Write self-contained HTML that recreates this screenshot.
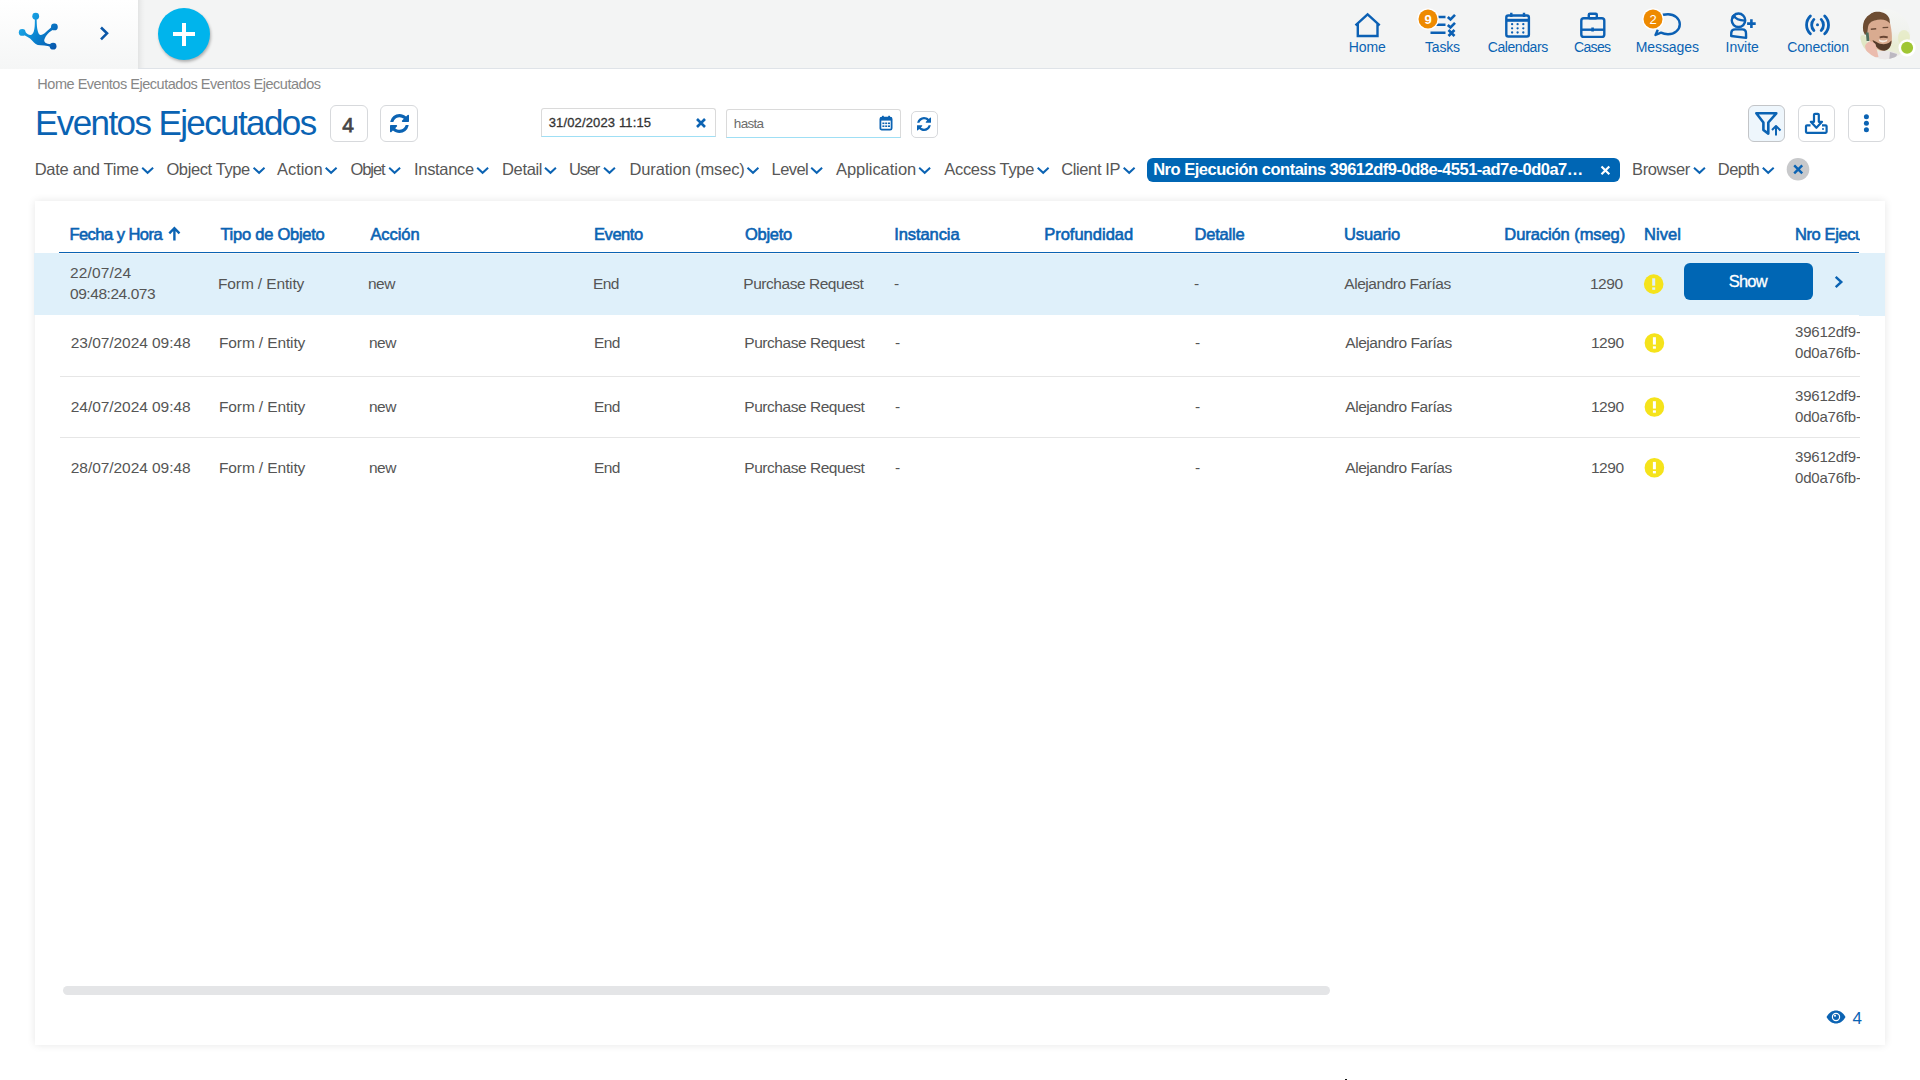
<!DOCTYPE html>
<html><head><meta charset="utf-8">
<style>
html,body{margin:0;padding:0;width:1920px;height:1080px;overflow:hidden;background:#fff;font-family:"Liberation Sans",sans-serif;}
.t{position:absolute;white-space:nowrap;line-height:1;}
.a{position:absolute;}
#hdr{position:absolute;left:0;top:0;width:1920px;height:68px;background:#f3f4f4;border-bottom:1px solid #dfe3e8;}
#lp{position:absolute;left:0;top:0;width:138px;height:69px;background:linear-gradient(180deg,#ffffff 0%,#f5f6f6 100%);}
#lpshadow{position:absolute;left:138px;top:0;width:7px;height:68px;background:linear-gradient(90deg,rgba(0,0,0,0.065),rgba(0,0,0,0.02) 60%,rgba(0,0,0,0));}
.btn{position:absolute;box-sizing:border-box;border:1px solid #d7d9dc;border-radius:6px;background:#fff;}
.inp{position:absolute;box-sizing:border-box;border:1px solid #dadada;border-bottom:1px solid #9fdff5;border-radius:3px 3px 0 0;background:#fff;}
#card{position:absolute;left:35px;top:201px;width:1850px;height:844px;background:#fff;box-shadow:0 0 8px rgba(0,0,0,0.10);}
.hl{position:absolute;background:#dff0fa;}
.rb{position:absolute;height:1px;background:#e6e6e6;}
.clip{position:absolute;overflow:hidden;white-space:nowrap;}
</style></head><body>
<div id="hdr"></div>
<div id="lpshadow"></div>
<div id="lp"></div>

<!-- logo -->
<svg class="a" style="left:0;top:0" width="138" height="68" viewBox="0 0 138 68">
  <defs>
    <linearGradient id="lg" x1="15" y1="20" x2="58" y2="50" gradientUnits="userSpaceOnUse">
      <stop offset="0" stop-color="#22b4f0"/>
      <stop offset="0.5" stop-color="#0a84d0"/>
      <stop offset="1" stop-color="#0850a6"/>
    </linearGradient>
  </defs>
  <g fill="url(#lg)">
    <circle cx="35.7" cy="16.2" r="3.4"/>
    <circle cx="22.2" cy="32.4" r="3.4"/>
    <circle cx="54.4" cy="26.9" r="3.4"/>
    <circle cx="53.1" cy="46.2" r="3.4"/>
    <path d="M22.2,30.5 C25.5,31 26.5,34.8 30.4,34.9 C33.5,35 34.6,30 34.8,24 L34.9,18 L36.6,18 L36.8,24 C37,30 38.5,35 40.7,35.1 C43.5,35.2 47,31 53.3,25.6 L55.2,28.4 C49,31.5 45.5,35.5 44.2,40 C44,43 47.5,44.2 52.6,44.2 L53.4,48.2 C49.5,46 46,45.3 40.5,45.3 C36.5,45.3 34.5,43.5 32.3,40.8 C29.5,37.5 26,35.8 22,34.5 Z"/>
  </g>
  <path d="M101,27.5 L107,33.3 L101,39.3" stroke="#0b57a8" stroke-width="2.6" fill="none"/>
</svg>

<!-- plus button -->
<div class="a" style="left:158px;top:8px;width:52px;height:52px;border-radius:50%;background:#00b4ec;box-shadow:1px 2px 3px rgba(0,0,0,0.28);"></div>
<div class="a" style="left:173px;top:32px;width:22px;height:4px;background:#fff;"></div>
<div class="a" style="left:182px;top:23px;width:4px;height:23px;background:#fff;"></div>

<!-- nav icons -->
<svg class="a" style="left:1330px;top:0" width="520" height="68" viewBox="1330 0 520 68">
  <g stroke="#0b60b4" stroke-width="2.4" fill="none">
    <!-- home -->
    <path d="M1355.5,25.3 L1367.6,14.4 L1379.7,25.3 M1357.8,23.3 L1357.8,36 L1377.5,36 L1377.5,23.3"/>
    <!-- tasks -->
    <path d="M1437,17 L1445.5,17 M1436,24.8 L1445.5,24.8 M1430.5,32.8 L1445.5,32.8"/>
    <path d="M1447.8,17 L1450.5,19.5 L1455,14.8 M1447.8,25 L1450.5,27.5 L1455,22.8" stroke-width="2.6"/>
    <path d="M1448.5,30 L1454.5,36 M1454.5,30 L1448.5,36" stroke-width="2.6"/>
    <!-- calendar -->
    <rect x="1506.3" y="15.5" width="22.6" height="21" rx="2"/>
    <path d="M1506.3,20.3 L1528.9,20.3" stroke-width="3"/>
    <path d="M1511.3,12.8 L1511.3,17 M1524,12.8 L1524,17"/>
    <!-- cases -->
    <rect x="1581.3" y="18.3" width="23" height="18.6" rx="2.5"/>
    <rect x="1588.8" y="13.8" width="8" height="4.5" rx="1"/>
    <path d="M1581.3,29.7 L1604.3,29.7"/>
    <path d="M1592.6,27.5 L1592.6,31.5" stroke-width="2.6"/>
    <!-- messages -->
    <path d="M1659,16.5 C1662,14.8 1665,14.2 1668,14.2 C1674.5,14.2 1679.8,18.6 1679.8,24.2 C1679.8,29.8 1674.5,34.2 1668,34.2 C1665.5,34.2 1663,33.6 1661,32.6 L1655.5,35 L1657.8,29.8" stroke-linejoin="round"/>
    <!-- invite -->
    <circle cx="1738.5" cy="20.3" r="6.75"/>
    <path d="M1733.2,15.2 C1735.5,19 1739.5,20.8 1745.6,20.6"/>
    <path d="M1731.2,36 L1731.3,32.5 C1731.6,30.3 1733,29.4 1735,29.4 L1742.3,29.4 C1744.8,29.4 1746,31 1746,33.2 L1746.1,37.9 Z" stroke-linejoin="round"/>
    <path d="M1751.4,19.3 L1751.4,27.9 M1747.1,23.6 L1755.7,23.6" stroke-width="2.6"/>
    <!-- conection -->
    <path d="M1810.4,16 C1805.3,21 1805.3,29 1810.4,33.8 M1824.7,16 C1829.8,21 1829.8,29 1824.7,33.8" stroke-width="2.8" stroke-linecap="round"/>
    <path d="M1813.9,19.4 C1810.9,22.5 1810.9,27.5 1813.9,30.5 M1821.2,19.4 C1824.2,22.5 1824.2,27.5 1821.2,30.5" stroke-width="2.8" stroke-linecap="round"/>
  </g>
  <g fill="#0b60b4">
    <circle cx="1817.5" cy="24.7" r="1.5"/>
    <path d="M1731.5,16 L1734.5,13.8 L1735.5,17.5 L1732,19.5 Z"/>
    <circle cx="1512.1" cy="24.2" r="1.15"/><circle cx="1517.6" cy="24.2" r="1.15"/><circle cx="1523.3" cy="24.2" r="1.15"/>
    <circle cx="1512.1" cy="28.3" r="1.15"/><circle cx="1517.6" cy="28.3" r="1.15"/><circle cx="1523.3" cy="28.3" r="1.15"/>
    <circle cx="1512.1" cy="32.5" r="1.15"/><circle cx="1517.6" cy="32.5" r="1.15"/><circle cx="1523.3" cy="32.5" r="1.15"/>
  </g>
  <!-- badges -->
  <circle cx="1428" cy="19" r="10.8" fill="#fff"/>
  <circle cx="1428" cy="19" r="9.5" fill="#ee8a00"/>
  <text x="1428" y="23.5" font-family="Liberation Sans" font-weight="700" font-size="13" fill="#fff" text-anchor="middle">9</text>
  <circle cx="1653" cy="19" r="10.8" fill="#fff"/>
  <circle cx="1653" cy="19" r="9.5" fill="#ee8a00"/>
  <text x="1653" y="23.5" font-family="Liberation Sans" font-weight="400" font-size="13" fill="#fff" text-anchor="middle">2</text>
</svg>

<!-- avatar -->
<svg class="a" style="left:1855px;top:4px" width="65" height="60" viewBox="1855 4 65 60">
  <defs>
    <clipPath id="av"><circle cx="1885.1" cy="34.1" r="25.1"/></clipPath>
    <linearGradient id="bgav" x1="0" y1="0" x2="0" y2="1">
      <stop offset="0" stop-color="#f6f7f6"/><stop offset="0.45" stop-color="#f0f2ee"/><stop offset="0.7" stop-color="#e8ecd2"/><stop offset="1" stop-color="#eef0e6"/>
    </linearGradient>
  </defs>
  <g clip-path="url(#av)">
    <rect x="1855" y="4" width="65" height="60" fill="url(#bgav)"/>
    <ellipse cx="1904" cy="38" rx="6" ry="8" fill="#e4e9bd" opacity="0.7"/>
    <ellipse cx="1863" cy="42" rx="4" ry="7" fill="#dde5bf" opacity="0.8"/>
    <path d="M1874,53 C1881,49.5 1892,50 1900,55 L1900,62 L1872,62 Z" fill="#ebe7e8"/>
    <path d="M1890,52 L1897,54 L1895,62 L1889,62 Z" fill="#9c9aa6" opacity="0.6"/>
    <path d="M1867.5,24 C1874,19 1883,17 1889.5,21 C1891.5,28 1892.5,37 1891.5,43.5 C1889.5,49.5 1884,51.5 1880,50.5 C1874,48.5 1869.5,42 1868,36 Z" fill="#d9ab90"/>
    <path d="M1863.2,31 C1861.8,21 1866.5,13.5 1874.5,12 C1881.5,11 1887.5,13.5 1889.5,19 L1889.8,23.5 C1887,19.5 1881,18.5 1874.5,20.5 C1870.5,21.8 1868.5,23.5 1868,27 L1867.5,33 L1865,35 Z" fill="#6d4c32"/>
    <path d="M1870.8,29.3 L1876.2,28.8 M1882.6,27.6 L1888.2,27.4" stroke="#6a4a36" stroke-width="1.4"/>
    <path d="M1879.5,36.5 C1882,35.5 1885.5,35.5 1888,36.5 L1887.5,38.2 C1885,37.5 1882,37.5 1879.8,38.2 Z" fill="#6a4634"/>
    <path d="M1872.5,40 C1875,47 1879.5,50.8 1884.5,50.8 C1889.5,50 1891.5,45.5 1891.5,40.5 L1889,42.8 C1886,44.8 1880.5,44.8 1876.5,42 Z" fill="#553b2b"/>
    <path d="M1878.8,39.2 C1881.5,41 1885,41 1887.5,39.2 L1887,41.3 C1884,42.8 1881,42.8 1879.2,41.3 Z" fill="#f4e8e0"/>
    <path d="M1865,46 C1866.8,40.5 1872,40 1875.5,44 L1878.5,57 L1867,58 Z" fill="#ebbcae"/>
    <path d="M1865.8,32.5 L1868.6,32.5 L1869.4,41 L1866.6,41 Z" fill="#4e6e5c"/>
  </g>
  <circle cx="1907.1" cy="47.8" r="8.6" fill="#fff"/>
  <circle cx="1907.1" cy="47.8" r="6" fill="#a0c634"/>
</svg>

<!-- title row buttons -->
<div class="btn" style="left:330px;top:105px;width:38px;height:37px;"></div>
<div class="btn" style="left:380px;top:105px;width:38px;height:37px;"></div>
<svg class="a" style="left:390px;top:114px" width="19" height="19" viewBox="0 0 1536 1536"><path fill="#0b63b3" d="M1511 928q0 5-1 7-64 268-268 434.5T764 1536q-146 0-282.5-55T238 1324l-129 129q-19 19-45 19t-45-19-19-45V960q0-26 19-45t45-19h448q26 0 45 19t19 45-19 45l-137 137q71 66 161 102t187 36q134 0 250-65t186-179q11-17 53-117 8-23 30-23h192q13 0 22.5 9.5t9.5 22.5zm25-800v448q0 26-19 45t-45 19h-448q-26 0-45-19t-19-45 19-45l138-138Q969 256 768 256q-134 0-250 65T332 500q-11 17-53 117-8 23-30 23H50q-13 0-22.5-9.5T18 608v-7q65-268 270-434.5T768 0q146 0 284 55.5T1297 212l130-129q19-19 45-19t45 19 19 45z"/></svg>

<!-- inputs -->
<div class="inp" style="left:541px;top:108px;width:175px;height:29px;"></div>
<svg class="a" style="left:695px;top:117px" width="12" height="12" viewBox="0 0 12 12"><path d="M2,2 L10,10 M10,2 L2,10" stroke="#0b63b3" stroke-width="2.6"/></svg>
<div class="inp" style="left:726px;top:109px;width:175px;height:29px;"></div>
<svg class="a" style="left:879px;top:115px" width="14" height="16" viewBox="0 0 14 16">
  <g fill="#0b63b3"><rect x="3" y="0.8" width="1.8" height="3"/><rect x="9.2" y="0.8" width="1.8" height="3"/></g>
  <rect x="1.4" y="2.6" width="11.2" height="12" rx="1.4" fill="none" stroke="#0b63b3" stroke-width="1.8"/>
  <rect x="1.4" y="2.6" width="11.2" height="3" fill="#0b63b3"/>
  <g fill="#0b63b3"><rect x="3.4" y="7.5" width="2" height="1.6"/><rect x="6.2" y="7.5" width="2" height="1.6"/><rect x="9" y="7.5" width="2" height="1.6"/><rect x="3.4" y="10.4" width="2" height="1.6"/><rect x="6.2" y="10.4" width="2" height="1.6"/><rect x="9" y="10.4" width="2" height="1.6"/></g>
</svg>
<div class="btn" style="left:911px;top:111px;width:27px;height:27px;border-radius:5px;"></div>
<svg class="a" style="left:917px;top:117px" width="14" height="14" viewBox="0 0 1536 1536"><path fill="#0b63b3" d="M1511 928q0 5-1 7-64 268-268 434.5T764 1536q-146 0-282.5-55T238 1324l-129 129q-19 19-45 19t-45-19-19-45V960q0-26 19-45t45-19h448q26 0 45 19t19 45-19 45l-137 137q71 66 161 102t187 36q134 0 250-65t186-179q11-17 53-117 8-23 30-23h192q13 0 22.5 9.5t9.5 22.5zm25-800v448q0 26-19 45t-45 19h-448q-26 0-45-19t-19-45 19-45l138-138Q969 256 768 256q-134 0-250 65T332 500q-11 17-53 117-8 23-30 23H50q-13 0-22.5-9.5T18 608v-7q65-268 270-434.5T768 0q146 0 284 55.5T1297 212l130-129q19-19 45-19t45 19 19 45z"/></svg>

<!-- right buttons -->
<div class="btn" style="left:1748px;top:105px;width:37px;height:37px;background:#eef6fc;border-color:#c3c5c8;"></div>
<div class="btn" style="left:1798px;top:105px;width:37px;height:37px;"></div>
<div class="btn" style="left:1848px;top:105px;width:37px;height:37px;"></div>
<svg class="a" style="left:1748px;top:105px" width="140" height="37" viewBox="1748 105 140 37">
  <g stroke="#0b63b3" stroke-width="2.6" fill="none" stroke-linejoin="round">
    <path d="M1756.3,113.3 L1776.3,113.3 L1768.3,122.5 L1768.3,133.6 L1763.4,130 L1763.4,122.5 Z"/>
    <path d="M1776,135.5 L1776,126 M1772,130 L1776,126 L1780.5,130.5" stroke-width="2"/>
    <path d="M1810.5,125.3 L1807,125.3 Q1806,125.3 1806,126.3 L1806,131.8 Q1806,132.8 1807,132.8 L1825.6,132.8 Q1826.6,132.8 1826.6,131.8 L1826.6,126.3 Q1826.6,125.3 1825.6,125.3 L1822,125.3" stroke-width="2.2"/>
    <path d="M1814,121.8 L1814,114.8 Q1814,113.8 1815,113.8 L1817.8,113.8 Q1818.8,113.8 1818.8,114.8 L1818.8,121.8 L1822,121.8 L1816.4,127.8 L1810.8,121.8 Z" stroke-width="2.2"/>
  </g>
  <circle cx="1823" cy="129" r="1" fill="#0b63b3"/>
  <g fill="#0b63b3"><circle cx="1866.4" cy="116.8" r="2.5"/><circle cx="1866.4" cy="123.3" r="2.5"/><circle cx="1866.4" cy="129.8" r="2.5"/></g>
</svg>

<!-- filter chevrons -->
<svg class="a" style="left:0;top:150px" width="1920" height="40" viewBox="0 150 1920 40">
  <g stroke="#0b63b3" stroke-width="2" fill="none">
    <path d="M142.2,167.8 L147.6,172.8 L153.1,167.8"/>
<path d="M253.6,167.8 L259.1,172.8 L264.5,167.8"/>
<path d="M325.7,167.8 L331.1,172.8 L336.6,167.8"/>
<path d="M389.2,167.8 L394.6,172.8 L400.1,167.8"/>
<path d="M477.2,167.8 L482.6,172.8 L488.1,167.8"/>
<path d="M545.0,167.8 L550.5,172.8 L555.9,167.8"/>
<path d="M604.0,167.8 L609.5,172.8 L614.9,167.8"/>
<path d="M747.5,167.8 L753.0,172.8 L758.4,167.8"/>
<path d="M811.2,167.8 L816.7,172.8 L822.1,167.8"/>
<path d="M919.2,167.8 L924.7,172.8 L930.1,167.8"/>
<path d="M1037.7,167.8 L1043.2,172.8 L1048.6,167.8"/>
<path d="M1123.7,167.8 L1129.2,172.8 L1134.6,167.8"/>
<path d="M1694.0,167.8 L1699.5,172.8 L1704.9,167.8"/>
<path d="M1762.8,167.8 L1768.2,172.8 L1773.7,167.8"/>
  </g>
  <rect x="1147" y="158" width="473" height="24" rx="6" fill="#0066b4"/>
  <path d="M1601.5,166.5 L1609.3,174.3 M1609.3,166.5 L1601.5,174.3" stroke="#fff" stroke-width="2.2"/>
  <circle cx="1798" cy="169.3" r="11.3" fill="#c8c9cb"/>
  <path d="M1794.2,165.3 L1802.2,173.3 M1802.2,165.3 L1794.2,173.3" stroke="#0b63b3" stroke-width="2.4"/>
</svg>

<!-- card -->
<div id="card"></div>
<div class="hl" style="left:34px;top:253px;width:1851px;height:62px;"></div>
<div class="a" style="left:59px;top:253px;width:1800px;height:1px;background:#f4f6f7;"></div>
<div class="hl" style="left:1859px;top:315px;width:26px;height:1px;"></div>
<div class="a" style="left:59px;top:252px;width:1800px;height:1px;background:#0a63b3;"></div>
<div class="rb" style="left:60px;top:376px;width:1800px;"></div>
<div class="rb" style="left:60px;top:437px;width:1800px;"></div>

<!-- table header arrow -->
<svg class="a" style="left:166px;top:224px" width="18" height="18" viewBox="166 224 18 18">
  <path d="M174.4,240.5 L174.4,228.5 M169.3,233.3 L174.4,228.2 L179.5,233.3" stroke="#0b63b3" stroke-width="2.4" fill="none"/>
</svg>

<!-- warning icons -->
<svg class="a" style="left:1640px;top:270px" width="30" height="210" viewBox="1640 270 30 210">
  <circle cx="1653.7" cy="284.1" r="9.8" fill="#f5e31b"/><rect x="1652.2" y="278.3" width="3" height="7.4" fill="#dff0fa"/><rect x="1652.2" y="287.4" width="3" height="2.4" fill="#dff0fa"/>
<circle cx="1654.4" cy="343" r="9.8" fill="#f5e31b"/><rect x="1652.9" y="337.2" width="3" height="7.4" fill="#fff"/><rect x="1652.9" y="346.3" width="3" height="2.4" fill="#fff"/>
<circle cx="1654.4" cy="407" r="9.8" fill="#f5e31b"/><rect x="1652.9" y="401.2" width="3" height="7.4" fill="#fff"/><rect x="1652.9" y="410.3" width="3" height="2.4" fill="#fff"/>
<circle cx="1654.4" cy="467.7" r="9.8" fill="#f5e31b"/><rect x="1652.9" y="461.9" width="3" height="7.4" fill="#fff"/><rect x="1652.9" y="471.0" width="3" height="2.4" fill="#fff"/>
</svg>

<!-- show button -->
<div class="a" style="left:1684px;top:263px;width:129px;height:37px;border-radius:6px;background:#0066b4;"></div>
<svg class="a" style="left:1830px;top:272px" width="16" height="20" viewBox="1830 272 16 20">
  <path d="M1835.7,276.8 L1841.3,282 L1835.7,287.2" stroke="#0b63b3" stroke-width="2.4" fill="none"/>
</svg>

<!-- nro ejecucion clipped -->
<div class="clip" style="left:1790px;top:220px;width:70px;height:30px;"><div class="t" style="left:5px;top:6px;font-size:16.5px;color:#0a63b3;-webkit-text-stroke:0.6px #0a63b3;letter-spacing:-0.4px">Nro Ejecución</div></div>
<div class="clip" style="left:1795px;top:320.40px;width:65px;height:40px;"><div class="t" style="left:0;top:4px;font-size:15px;color:#555;line-height:21.1px;top:0.95px;letter-spacing:-0.2px">39612df9-0d8e-4551-<br>0d0a76fb-1234</div></div>
<div class="clip" style="left:1795px;top:384.10px;width:65px;height:40px;"><div class="t" style="left:0;top:4px;font-size:15px;color:#555;line-height:21.1px;top:0.95px;letter-spacing:-0.2px">39612df9-0d8e-4551-<br>0d0a76fb-1234</div></div>
<div class="clip" style="left:1795px;top:444.90px;width:65px;height:40px;"><div class="t" style="left:0;top:4px;font-size:15px;color:#555;line-height:21.1px;top:0.95px;letter-spacing:-0.2px">39612df9-0d8e-4551-<br>0d0a76fb-1234</div></div>

<!-- scrollbar -->
<div class="a" style="left:63px;top:986px;width:1267px;height:9px;border-radius:5px;background:#e4e5e7;"></div>

<!-- footer eye -->
<svg class="a" style="left:1826px;top:1010px" width="20" height="14" viewBox="0 0 20 14">
  <path d="M0.5,7 C3,2.5 6.5,0.5 10,0.5 C13.5,0.5 17,2.5 19.5,7 C17,11.5 13.5,13.5 10,13.5 C6.5,13.5 3,11.5 0.5,7 Z" fill="#0b63b3"/>
  <circle cx="10" cy="7" r="4.2" fill="#fff"/>
  <circle cx="10" cy="7" r="3" fill="#0b63b3"/>
  <circle cx="9" cy="5.8" r="1" fill="#fff"/>
</svg>

<div class="t" style="left:37.30px;top:77px;font-size:14.5px;font-weight:400;color:#878787;letter-spacing:-0.473px;">Home Eventos Ejecutados Eventos Ejecutados</div>
<div class="t" style="left:35.00px;top:105px;font-size:35px;font-weight:400;color:#0a63b3;letter-spacing:-1.598px;">Eventos Ejecutados</div>
<div class="t" style="left:342.20px;top:114px;font-size:21px;font-weight:400;-webkit-text-stroke:0.75px #454545;color:#454545;letter-spacing:0.000px;">4</div>
<div class="t" style="left:548.75px;top:116px;font-size:13px;font-weight:400;-webkit-text-stroke:0.3px #333;color:#333;letter-spacing:0.136px;">31/02/2023 11:15</div>
<div class="t" style="left:733.80px;top:117px;font-size:13.5px;font-weight:400;color:#6c6c6c;letter-spacing:-0.679px;">hasta</div>
<div class="t" style="left:34.65px;top:161px;font-size:16.5px;font-weight:400;color:#575757;letter-spacing:-0.256px;">Date and Time</div>
<div class="t" style="left:166.40px;top:161px;font-size:16.5px;font-weight:400;color:#575757;letter-spacing:-0.387px;">Object Type</div>
<div class="t" style="left:277.00px;top:161px;font-size:16.5px;font-weight:400;color:#575757;letter-spacing:-0.036px;">Action</div>
<div class="t" style="left:350.50px;top:161px;font-size:16.5px;font-weight:400;color:#575757;letter-spacing:-1.088px;">Objet</div>
<div class="t" style="left:414.00px;top:161px;font-size:16.5px;font-weight:400;color:#575757;letter-spacing:-0.314px;">Instance</div>
<div class="t" style="left:502.00px;top:161px;font-size:16.5px;font-weight:400;color:#575757;letter-spacing:-0.344px;">Detail</div>
<div class="t" style="left:569.00px;top:161px;font-size:16.5px;font-weight:400;color:#575757;letter-spacing:-1.181px;">User</div>
<div class="t" style="left:629.50px;top:161px;font-size:16.5px;font-weight:400;color:#575757;letter-spacing:-0.148px;">Duration (msec)</div>
<div class="t" style="left:771.60px;top:161px;font-size:16.5px;font-weight:400;color:#575757;letter-spacing:-0.595px;">Level</div>
<div class="t" style="left:836.00px;top:161px;font-size:16.5px;font-weight:400;color:#575757;letter-spacing:-0.054px;">Application</div>
<div class="t" style="left:944.30px;top:161px;font-size:16.5px;font-weight:400;color:#575757;letter-spacing:-0.316px;">Access Type</div>
<div class="t" style="left:1061.20px;top:161px;font-size:16.5px;font-weight:400;color:#575757;letter-spacing:-0.382px;">Client IP</div>
<div class="t" style="left:1632.00px;top:161px;font-size:16.5px;font-weight:400;color:#575757;letter-spacing:-0.370px;">Browser</div>
<div class="t" style="left:1717.75px;top:161px;font-size:16.5px;font-weight:400;color:#575757;letter-spacing:-0.501px;">Depth</div>
<div class="t" style="left:1153.20px;top:161px;font-size:16.5px;font-weight:700;color:#fff;letter-spacing:-0.494px;">Nro Ejecución contains 39612df9-0d8e-4551-ad7e-0d0a7…</div>
<div class="t" style="left:1348.80px;top:40px;font-size:14px;font-weight:400;color:#0a63b3;letter-spacing:-0.120px;">Home</div>
<div class="t" style="left:1425.00px;top:40px;font-size:14px;font-weight:400;color:#0a63b3;letter-spacing:-0.197px;">Tasks</div>
<div class="t" style="left:1487.70px;top:40px;font-size:14px;font-weight:400;color:#0a63b3;letter-spacing:-0.414px;">Calendars</div>
<div class="t" style="left:1574.00px;top:40px;font-size:14px;font-weight:400;color:#0a63b3;letter-spacing:-0.671px;">Cases</div>
<div class="t" style="left:1635.70px;top:40px;font-size:14px;font-weight:400;color:#0a63b3;letter-spacing:-0.072px;">Messages</div>
<div class="t" style="left:1725.60px;top:40px;font-size:14px;font-weight:400;color:#0a63b3;letter-spacing:-0.055px;">Invite</div>
<div class="t" style="left:1787.30px;top:40px;font-size:14px;font-weight:400;color:#0a63b3;letter-spacing:-0.169px;">Conection</div>
<div class="t" style="left:69.40px;top:226px;font-size:16.5px;font-weight:400;-webkit-text-stroke:0.6px #0a63b3;color:#0a63b3;letter-spacing:-0.524px;">Fecha y Hora</div>
<div class="t" style="left:220.40px;top:226px;font-size:16.5px;font-weight:400;-webkit-text-stroke:0.6px #0a63b3;color:#0a63b3;letter-spacing:-0.250px;">Tipo de Objeto</div>
<div class="t" style="left:370.40px;top:226px;font-size:16.5px;font-weight:400;-webkit-text-stroke:0.6px #0a63b3;color:#0a63b3;letter-spacing:-0.070px;">Acción</div>
<div class="t" style="left:594.00px;top:226px;font-size:16.5px;font-weight:400;-webkit-text-stroke:0.6px #0a63b3;color:#0a63b3;letter-spacing:-0.439px;">Evento</div>
<div class="t" style="left:745.00px;top:226px;font-size:16.5px;font-weight:400;-webkit-text-stroke:0.6px #0a63b3;color:#0a63b3;letter-spacing:-0.287px;">Objeto</div>
<div class="t" style="left:894.20px;top:226px;font-size:16.5px;font-weight:400;-webkit-text-stroke:0.6px #0a63b3;color:#0a63b3;letter-spacing:-0.083px;">Instancia</div>
<div class="t" style="left:1044.20px;top:226px;font-size:16.5px;font-weight:400;-webkit-text-stroke:0.6px #0a63b3;color:#0a63b3;letter-spacing:-0.001px;">Profundidad</div>
<div class="t" style="left:1194.50px;top:226px;font-size:16.5px;font-weight:400;-webkit-text-stroke:0.6px #0a63b3;color:#0a63b3;letter-spacing:-0.214px;">Detalle</div>
<div class="t" style="left:1344.00px;top:226px;font-size:16.5px;font-weight:400;-webkit-text-stroke:0.6px #0a63b3;color:#0a63b3;letter-spacing:-0.113px;">Usuario</div>
<div class="t" style="left:1504.30px;top:226px;font-size:16.5px;font-weight:400;-webkit-text-stroke:0.6px #0a63b3;color:#0a63b3;letter-spacing:-0.076px;">Duración (mseg)</div>
<div class="t" style="left:1644.00px;top:226px;font-size:16.5px;font-weight:400;-webkit-text-stroke:0.6px #0a63b3;color:#0a63b3;letter-spacing:0.073px;">Nivel</div>
<div class="t" style="left:70.00px;top:265px;font-size:15.5px;font-weight:400;color:#555;letter-spacing:0.126px;">22/07/24</div>
<div class="t" style="left:70.00px;top:286px;font-size:15.5px;font-weight:400;color:#555;letter-spacing:-0.444px;">09:48:24.073</div>
<div class="t" style="left:218.00px;top:276px;font-size:15.5px;font-weight:400;color:#555;letter-spacing:-0.125px;">Form / Entity</div>
<div class="t" style="left:368.00px;top:276px;font-size:15.5px;font-weight:400;color:#555;letter-spacing:-0.520px;">new</div>
<div class="t" style="left:593.00px;top:276px;font-size:15.5px;font-weight:400;color:#555;letter-spacing:-0.629px;">End</div>
<div class="t" style="left:743.30px;top:276px;font-size:15.5px;font-weight:400;color:#555;letter-spacing:-0.461px;">Purchase Request</div>
<div class="t" style="left:894.00px;top:276px;font-size:15.5px;font-weight:400;color:#555;letter-spacing:0.000px;">-</div>
<div class="t" style="left:1194.00px;top:276px;font-size:15.5px;font-weight:400;color:#555;letter-spacing:0.000px;">-</div>
<div class="t" style="left:1344.30px;top:276px;font-size:15.5px;font-weight:400;color:#555;letter-spacing:-0.451px;">Alejandro Farías</div>
<div class="t" style="left:1589.90px;top:276px;font-size:15.5px;font-weight:400;color:#555;letter-spacing:-0.454px;">1290</div>
<div class="t" style="left:70.80px;top:335px;font-size:15.5px;font-weight:400;color:#555;letter-spacing:-0.057px;">23/07/2024 09:48</div>
<div class="t" style="left:219.00px;top:335px;font-size:15.5px;font-weight:400;color:#555;letter-spacing:-0.125px;">Form / Entity</div>
<div class="t" style="left:369.00px;top:335px;font-size:15.5px;font-weight:400;color:#555;letter-spacing:-0.520px;">new</div>
<div class="t" style="left:594.00px;top:335px;font-size:15.5px;font-weight:400;color:#555;letter-spacing:-0.629px;">End</div>
<div class="t" style="left:744.30px;top:335px;font-size:15.5px;font-weight:400;color:#555;letter-spacing:-0.461px;">Purchase Request</div>
<div class="t" style="left:895.00px;top:335px;font-size:15.5px;font-weight:400;color:#555;letter-spacing:0.000px;">-</div>
<div class="t" style="left:1195.00px;top:335px;font-size:15.5px;font-weight:400;color:#555;letter-spacing:0.000px;">-</div>
<div class="t" style="left:1345.30px;top:335px;font-size:15.5px;font-weight:400;color:#555;letter-spacing:-0.451px;">Alejandro Farías</div>
<div class="t" style="left:1590.90px;top:335px;font-size:15.5px;font-weight:400;color:#555;letter-spacing:-0.454px;">1290</div>
<div class="t" style="left:70.80px;top:399px;font-size:15.5px;font-weight:400;color:#555;letter-spacing:-0.057px;">24/07/2024 09:48</div>
<div class="t" style="left:219.00px;top:399px;font-size:15.5px;font-weight:400;color:#555;letter-spacing:-0.125px;">Form / Entity</div>
<div class="t" style="left:369.00px;top:399px;font-size:15.5px;font-weight:400;color:#555;letter-spacing:-0.520px;">new</div>
<div class="t" style="left:594.00px;top:399px;font-size:15.5px;font-weight:400;color:#555;letter-spacing:-0.629px;">End</div>
<div class="t" style="left:744.30px;top:399px;font-size:15.5px;font-weight:400;color:#555;letter-spacing:-0.461px;">Purchase Request</div>
<div class="t" style="left:895.00px;top:399px;font-size:15.5px;font-weight:400;color:#555;letter-spacing:0.000px;">-</div>
<div class="t" style="left:1195.00px;top:399px;font-size:15.5px;font-weight:400;color:#555;letter-spacing:0.000px;">-</div>
<div class="t" style="left:1345.30px;top:399px;font-size:15.5px;font-weight:400;color:#555;letter-spacing:-0.451px;">Alejandro Farías</div>
<div class="t" style="left:1590.90px;top:399px;font-size:15.5px;font-weight:400;color:#555;letter-spacing:-0.454px;">1290</div>
<div class="t" style="left:70.80px;top:460px;font-size:15.5px;font-weight:400;color:#555;letter-spacing:-0.057px;">28/07/2024 09:48</div>
<div class="t" style="left:219.00px;top:460px;font-size:15.5px;font-weight:400;color:#555;letter-spacing:-0.125px;">Form / Entity</div>
<div class="t" style="left:369.00px;top:460px;font-size:15.5px;font-weight:400;color:#555;letter-spacing:-0.520px;">new</div>
<div class="t" style="left:594.00px;top:460px;font-size:15.5px;font-weight:400;color:#555;letter-spacing:-0.629px;">End</div>
<div class="t" style="left:744.30px;top:460px;font-size:15.5px;font-weight:400;color:#555;letter-spacing:-0.461px;">Purchase Request</div>
<div class="t" style="left:895.00px;top:460px;font-size:15.5px;font-weight:400;color:#555;letter-spacing:0.000px;">-</div>
<div class="t" style="left:1195.00px;top:460px;font-size:15.5px;font-weight:400;color:#555;letter-spacing:0.000px;">-</div>
<div class="t" style="left:1345.30px;top:460px;font-size:15.5px;font-weight:400;color:#555;letter-spacing:-0.451px;">Alejandro Farías</div>
<div class="t" style="left:1590.90px;top:460px;font-size:15.5px;font-weight:400;color:#555;letter-spacing:-0.454px;">1290</div>
<div class="t" style="left:1728.70px;top:273px;font-size:16.5px;font-weight:400;-webkit-text-stroke:0.3px #fff;color:#fff;letter-spacing:-0.786px;">Show</div>
<div class="t" style="left:1852.40px;top:1010px;font-size:17px;font-weight:400;color:#0a63b3;letter-spacing:0.000px;">4</div>

<!-- cursor tip -->
<div class="a" style="left:1345px;top:1079px;width:1.5px;height:1px;background:#111;"></div>
</body></html>
